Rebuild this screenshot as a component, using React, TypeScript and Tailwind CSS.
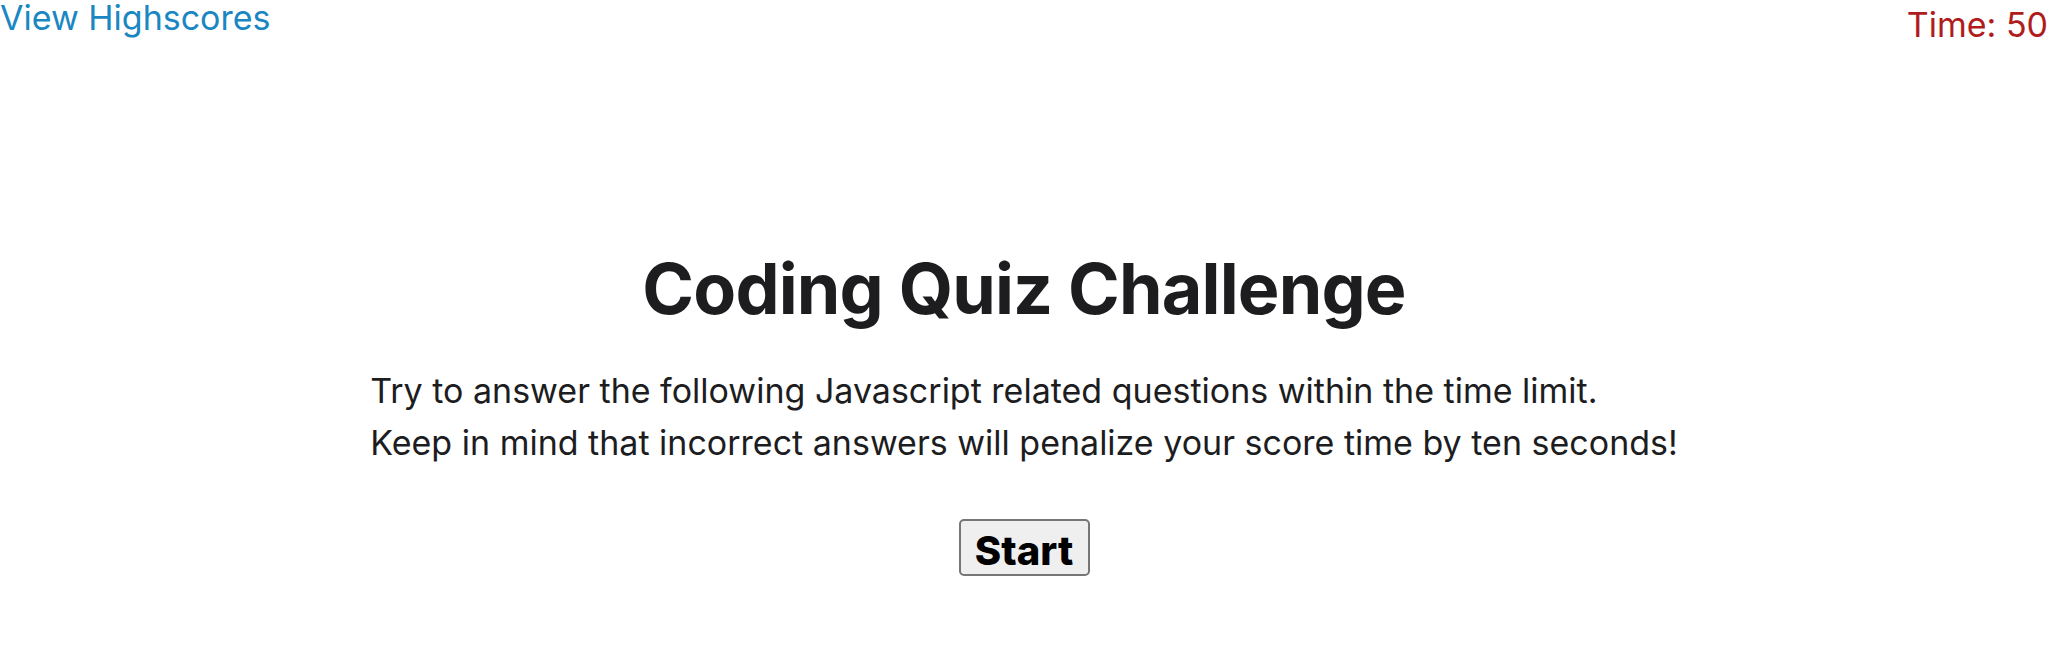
export default function App() {
  return (
    <div className="min-h-[666px] bg-white font-['Inter',sans-serif] text-[#1d1d1f]">
      <header className="flex items-start justify-between">
        <a href="#" className="text-[34px] leading-[36px] text-[#1b87c2]">
          View Highscores
        </a>
        <div className="pt-[5px] text-[34px] leading-[40px] text-[#b01c1c]">
          Time: 50
        </div>
      </header>

      <main className="flex flex-col items-center pt-[200px]">
        <h1 className="text-[70px] font-bold leading-[88px] tracking-[-0.012em]">
          Coding Quiz Challenge
        </h1>
        <p className="mt-[32px] text-left text-[34px] leading-[52px]">
          Try to answer the following Javascript related questions within the time limit.
          <br />
          Keep in mind that incorrect answers will penalize your score time by ten seconds!
        </p>
        <button className="mt-[50px] h-[57px] w-[131px] rounded-[5px] border-2 border-[#767676] bg-[#efefef] text-[40px] font-extrabold text-black">
          Start
        </button>
      </main>
    </div>
  )
}
